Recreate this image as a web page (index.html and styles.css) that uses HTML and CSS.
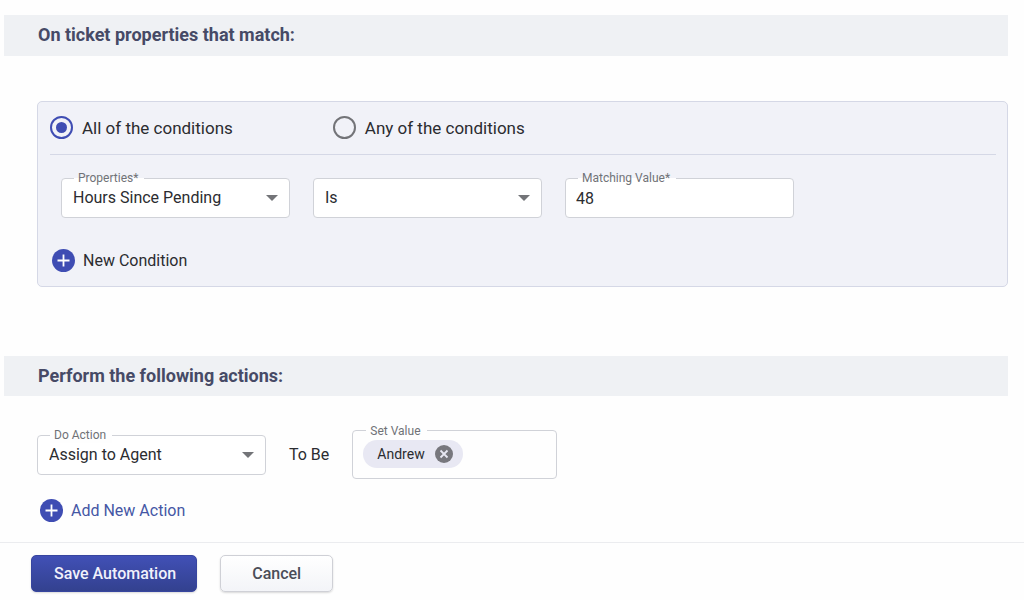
FILE: index.html
```
<!DOCTYPE html>
<html lang="en">
<head>
  <meta charset="UTF-8">
  <meta name="viewport" content="width=device-width, initial-scale=1.0">
  <title>Edit Automation</title>
  <link rel="stylesheet" href="styles.css">
</head>
<body>
  <form class="automation">
    <section>
      <h2 class="section-title">On ticket properties that match:</h2>

      <div class="conditions">
        <div class="match-options">
          <label class="radio">
            <input type="radio" name="match" value="all" checked>
            All of the conditions
          </label>
          <label class="radio">
            <input type="radio" name="match" value="any">
            Any of the conditions
          </label>
        </div>

        <div class="condition-row">
          <div class="field">
            <label for="property">Properties*</label>
            <select id="property">
              <option>Hours Since Pending</option>
            </select>
          </div>
          <div class="field">
            <select id="operator" aria-label="Operator">
              <option>Is</option>
            </select>
          </div>
          <div class="field">
            <label for="value">Matching Value*</label>
            <input type="text" id="value" value="48">
          </div>
        </div>

        <button type="button" class="add-btn">
          <svg width="23" height="23" viewBox="0 0 23 23" aria-hidden="true">
            <circle cx="11.5" cy="11.5" r="11.5" fill="#3f4db3"/>
            <path d="M11.5 5.5v12M5.5 11.5h12" stroke="#fff" stroke-width="1.8"/>
          </svg>
          New Condition
        </button>
      </div>
    </section>

    <section class="actions">
      <h2 class="section-title">Perform the following actions:</h2>

      <div class="action-row">
        <div class="field">
          <label for="action">Do Action</label>
          <select id="action">
            <option>Assign to Agent</option>
          </select>
        </div>
        <span>To Be</span>
        <div class="field chip-field">
          <label for="agent">Set Value</label>
          <span class="chip">
            Andrew
            <button type="button" class="chip-remove" aria-label="Remove Andrew">
              <svg width="18" height="18" viewBox="0 0 18 18" aria-hidden="true">
                <circle cx="9" cy="9" r="9" fill="#77777d"/>
                <path d="M5.5 5.5l7 7M12.5 5.5l-7 7" stroke="#e8e8f3" stroke-width="1.8"/>
              </svg>
            </button>
          </span>
          <input type="text" id="agent">
        </div>
      </div>

      <button type="button" class="add-btn add-action">
        <svg width="23" height="23" viewBox="0 0 23 23" aria-hidden="true">
          <circle cx="11.5" cy="11.5" r="11.5" fill="#3f4db3"/>
          <path d="M11.5 5.5v12M5.5 11.5h12" stroke="#fff" stroke-width="1.8"/>
        </svg>
        Add New Action
      </button>
    </section>

    <footer class="form-footer">
      <button type="submit" class="btn btn-primary">Save Automation</button>
      <button type="button" class="btn">Cancel</button>
    </footer>
  </form>
</body>
</html>
```
FILE: styles.css
```
* {
  box-sizing: border-box;
}

body {
  margin: 0;
  background-color: #fefefe;
  color: #2b2c30;
  font-family: Roboto, Arial, sans-serif;
  font-size: 16px;
  line-height: 20px;
}

button, input, select {
  font: inherit;
  color: inherit;
}

button {
  cursor: pointer;
}

section {
  padding: 15px 16px 0 4px;
}

.section-title {
  margin: 0;
  padding: 9px 34px 11px;
  background-color: #eff1f4;
  color: #464a66;
  font-size: 18px;
  font-weight: 700;
  line-height: 21px;
}

/* Conditions panel */
.conditions {
  margin: 45px 0 0 33px;
  padding: 0 11px 14px 12px;
  border: 1px solid #d5d8e6;
  border-radius: 5px;
  background-color: #f1f2f8;
}

.match-options {
  display: flex;
  gap: 100px;
  padding: 14px 0 15px;
  border-bottom: 1px solid #d5d8e6;
}

.radio {
  display: flex;
  align-items: center;
  gap: 9px;
  height: 23px;
  font-size: 17px;
}

.radio input {
  appearance: none;
  display: grid;
  place-items: center;
  width: 23px;
  height: 23px;
  margin: 0;
  border: 2px solid #737478;
  border-radius: 50%;
}

.radio input:checked {
  border-color: #3f4db3;
}

.radio input:checked::before {
  content: "";
  width: 11px;
  height: 11px;
  border-radius: 50%;
  background-color: #3f4db3;
}

.condition-row {
  display: flex;
  gap: 23px;
  padding: 23px 11px 31px;
}

/* Outlined fields, the label sits on the top border */
.field {
  position: relative;
  flex: 0 1 229px;
}

.field label {
  position: absolute;
  top: -8px;
  left: 13px;
  padding: 1px 6px 0 4px;
  background: linear-gradient(#f1f2f8 8px, #fff 8px);
  color: #707277;
  font-size: 12px;
  line-height: 15px;
}

.field select,
.field > input {
  display: block;
  width: 100%;
  height: 40px;
  padding: 0 11px;
  border: 1px solid #d0d2d8;
  border-radius: 4px;
  background-color: #fff;
}

.field > input {
  padding: 0 10px;
}

.field select {
  appearance: none;
  background-image: url("data:image/svg+xml,%3Csvg xmlns='http://www.w3.org/2000/svg' width='12' height='6'%3E%3Cpath d='M0 0h12L6 6z' fill='%23737478'/%3E%3C/svg%3E");
  background-repeat: no-repeat;
  background-position: right 11px center;
}

.add-btn {
  display: flex;
  align-items: center;
  gap: 8px;
  margin-left: 2px;
  padding: 0;
  border: 0;
  background: none;
}

/* Actions */
.actions {
  padding-top: 69px;
}

.actions .section-title {
  padding-bottom: 10px;
}

.action-row {
  display: flex;
  align-items: center;
  gap: 23px;
  padding: 34px 0 0 33px;
}

.actions .field label {
  background: #fefefe;
}

.field.chip-field {
  display: flex;
  align-items: center;
  flex-basis: 205px;
  height: 49px;
  padding: 0 10px 2px;
  border: 1px solid #d0d2d8;
  border-radius: 4px;
}

.chip-field > input {
  flex: 1;
  min-width: 0;
  height: 28px;
  border: 0;
  background: none;
  outline: none;
}

.chip {
  display: flex;
  align-items: center;
  gap: 10px;
  height: 28px;
  padding: 0 10px 0 14px;
  border-radius: 14px;
  background-color: #e8e8f3;
  font-size: 14px;
}

.chip-remove {
  display: flex;
  padding: 0;
  border: 0;
  background: none;
}

.add-action {
  margin: 20px 0 20px 36px;
  color: #4557a5;
}

/* Footer buttons */
.form-footer {
  display: flex;
  gap: 23px;
  padding: 12px 31px 9px;
  border-top: 1px solid #ebecef;
}

.btn {
  height: 37px;
  padding: 0 31px;
  border: 1px solid #cfd0d6;
  border-radius: 5px;
  background: linear-gradient(#fff, #f3f4f8);
  box-shadow: 0 1px 2px rgba(0, 0, 0, 0.15);
  color: #4b4d58;
  font-weight: 500;
}

.btn-primary {
  padding: 0 20px 0 22px;
  border-color: #37459f;
  background: linear-gradient(#4150b6, #33418f);
  color: #f0f1fb;
}
```
